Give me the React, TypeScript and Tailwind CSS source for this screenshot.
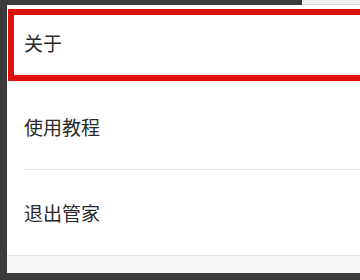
export default function App() {
  const font = { fontFamily: '"Noto Sans CJK SC", "Noto Sans", sans-serif' };
  return (
    <div className="relative w-[360px] h-[280px] overflow-hidden bg-[#3b3b3b]" style={font}>
      <div className="flex h-[5px]">
        <div className="w-[302px] bg-[#3b3b3b]" />
        <div className="flex-1 bg-[#f2f2f2] border-b border-[#d8d8d8]" />
      </div>
      <div className="ml-[7px] flex flex-col bg-white">
        <div className="h-[79px] flex items-center pl-[17px] pb-[4px]">
          <span className="text-[19px] leading-none text-[#2a2a2a]">关于</span>
        </div>
        <div className="ml-[17px] h-[86px] flex items-center border-b border-[#e6e6e6]">
          <span className="text-[19px] leading-none text-[#2a2a2a]">使用教程</span>
        </div>
        <div className="h-[86px] flex items-center pl-[17px] border-b border-[#e2e2e2]">
          <span className="text-[19px] leading-none text-[#2a2a2a]">退出管家</span>
        </div>
        <div className="h-[17px] bg-[#f7f7f7]" />
      </div>
      <div className="absolute left-[8px] top-[9px] w-[380px] h-[72px] border-[6px] border-[#de1010]" />
    </div>
  );
}
